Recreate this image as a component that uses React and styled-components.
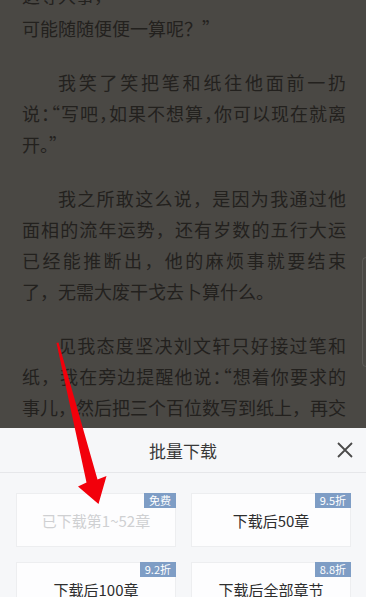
import React from 'react';
import styled, { createGlobalStyle } from 'styled-components';

const GlobalStyle = createGlobalStyle`
  html, body {
    margin: 0;
    padding: 0;
    background: #4a4844;
  }
  body {
    font-family: "Noto Sans CJK SC", "Noto Sans", sans-serif;
    overflow: hidden;
  }
`;

const Screen = styled.div`
  position: relative;
  width: 366px;
  height: 597px;
  overflow: hidden;
  background: #4a4844;
`;

const Article = styled.div`
  margin-top: -23px;
  padding: 0 20px 0 22px;
  color: #23211e;
  font-size: 18px;
  line-height: 31px;
`;

const Para = styled.div`
  margin-bottom: 23px;
`;

const Lead = styled.div`
  white-space: nowrap;
  line-height: 36px;
`;

const Line = styled.div`
  white-space: nowrap;
  text-indent: ${p => (p.indent ? '36px' : '0')};
  text-align: left;
  text-align-last: ${p => (p.full ? 'justify' : 'left')};
`;

const Half = styled.span`
  font-feature-settings: "halt";
`;

const EdgeGlow = styled.div`
  position: absolute;
  left: 362px;
  top: 257px;
  width: 8px;
  height: 108px;
  border: 1px solid rgba(255, 255, 255, 0.1);
  border-radius: 4px;
`;

const Sheet = styled.div`
  position: absolute;
  left: 0;
  right: 0;
  bottom: 0;
  height: 169px;
  overflow: hidden;
  background: #f6f7f9;
`;

const SheetHeader = styled.div`
  position: relative;
  height: 44px;
  display: flex;
  align-items: center;
  justify-content: center;
  border-bottom: 1px solid #e6e7ea;
  font-size: 17px;
  color: #383838;
`;

const Close = styled.button`
  position: absolute;
  right: 13px;
  top: 14px;
  width: 16px;
  height: 16px;
  padding: 0;
  border: none;
  background: none;
  display: flex;
`;

const Options = styled.div`
  display: grid;
  grid-template-columns: 160px 160px;
  column-gap: 15px;
  row-gap: 15px;
  padding: 20px 15px 0 16px;
`;

const Option = styled.div`
  position: relative;
  height: 54px;
  box-sizing: border-box;
  background: #fdfdfe;
  border: 1px solid #edeef0;
  display: flex;
  align-items: center;
  justify-content: center;
  font-size: 15px;
  color: ${p => (p.done ? '#cfd0d2' : '#2e2e2e')};
`;

const Badge = styled.span`
  position: absolute;
  top: -1px;
  right: -1px;
  height: 15px;
  padding: 0 5px;
  background: #7e9dc5;
  color: #ffffff;
  font-size: 11px;
  line-height: 15px;
`;

const Arrow = styled.svg`
  position: absolute;
  left: 0;
  top: 0;
  pointer-events: none;
`;

const options = [
  { label: '已下载第1~52章', tag: '免费', done: true },
  { label: '下载后50章', tag: '9.5折' },
  { label: '下载后100章', tag: '9.2折' },
  { label: '下载后全部章节', tag: '8.8折' },
];

function App() {
  return (
    <Screen>
      <GlobalStyle />
      <Article>
        <Para>
          <Lead>这等大事，</Lead>
          <Line>可能随随便便一算呢？”</Line>
        </Para>
        <Para>
          <Line indent full>我笑了笑把笔和纸往他面前一扔</Line>
          <Line full>说<Half>：“</Half>写吧<Half>，</Half>如果不想算<Half>，</Half>你可以现在就离</Line>
          <Line>开。”</Line>
        </Para>
        <Para>
          <Line indent full>我之所敢这么说，是因为我通过他</Line>
          <Line full>面相的流年运势，还有岁数的五行大运</Line>
          <Line full>已经能推断出，他的麻烦事就要结束</Line>
          <Line>了，无需大废干戈去卜算什么。</Line>
        </Para>
        <Para>
          <Line indent full>见我态度坚决刘文轩只好接过笔和</Line>
          <Line full>纸，我在旁边提醒他说<Half>：“</Half>想着你要求的</Line>
          <Line full>事儿，然后把三个百位数写到纸上，再交</Line>
          <Line>给我。”</Line>
        </Para>
      </Article>

      <EdgeGlow />

      <Sheet>
        <SheetHeader>
          批量下载
          <Close aria-label="关闭">
            <svg width="16" height="16" viewBox="0 0 16 16">
              <path d="M1 1 L15 15 M15 1 L1 15" stroke="#4a4a4a" strokeWidth="1.8" />
            </svg>
          </Close>
        </SheetHeader>
        <Options>
          {options.map((o, i) => (
            <Option key={i} done={o.done}>
              {o.label}
              <Badge>{o.tag}</Badge>
            </Option>
          ))}
        </Options>
      </Sheet>

      <Arrow width="366" height="597" viewBox="0 0 366 597">
        <polygon
          points="56.5,343 58.5,342.5 97.5,479.5 106.5,476 98.5,504 78,486.5 86.5,482.5"
          fill="#f2000b"
        />
      </Arrow>
    </Screen>
  );
}

export default App;
